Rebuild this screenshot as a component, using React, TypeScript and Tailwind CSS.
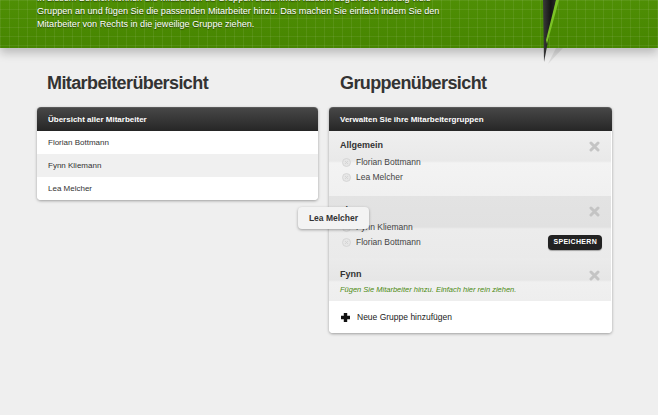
import React from 'react';

const font = { fontFamily: '"Liberation Sans", Arial, Helvetica, sans-serif' };

type Group = {
  name: string;
  members: string[];
  bg: string;
  pad: string;
  hint?: string;
  save?: boolean;
};

const groups: Group[] = [
  {
    name: 'Allgemein',
    members: ['Florian Bottmann', 'Lea Melcher'],
    bg: 'bg-[linear-gradient(#efefef_0px,#e9e9e9_30px,#f3f3f3_32px,#f0f0f0_100%)]',
    pad: 'pt-[8px] pb-[11px]',
  },
  {
    name: 'Firma',
    members: ['Fynn Kliemann', 'Florian Bottmann'],
    bg: 'bg-[linear-gradient(#e3e3e3_0px,#e1e1e1_31px,#ececec_33px,#eaeaea_100%)]',
    pad: 'pt-[8px] pb-[8px]',
    save: true,
  },
  {
    name: 'Fynn',
    members: [],
    bg: 'bg-[linear-gradient(#ebebeb_0px,#e6e6e6_22px,#f0f0f0_24px,#eeeeee_100%)]',
    pad: 'pt-[10px] pb-[4px]',
    hint: 'Fügen Sie Mitarbeiter hinzu. Einfach hier rein ziehen.',
  },
];

function CloseIcon() {
  return (
    <svg width="11" height="11" viewBox="0 0 11 11" className="shrink-0">
      <path d="M2 2 L9 9 M9 2 L2 9" stroke="#c4c4c4" strokeWidth="3" strokeLinecap="round" />
    </svg>
  );
}

function RemoveDot() {
  return (
    <svg width="9" height="9" viewBox="0 0 9 9" className="shrink-0">
      <circle cx="4.5" cy="4.5" r="4" fill="#e6e6e6" stroke="#d2d2d2" strokeWidth="0.8" />
      <path d="M3 3 L6 6 M6 3 L3 6" stroke="#d0d0d0" strokeWidth="0.8" />
    </svg>
  );
}

function PanelHeader({ title }: { title: string }) {
  return (
    <div className="flex h-[24px] items-center rounded-t-[4px] border-t border-[#5a5a5a] bg-[linear-gradient(#474747,#262626)] px-[11px] text-[8px] font-bold text-white">
      {title}
    </div>
  );
}

export default function App() {
  return (
    <div style={font} className="relative h-[415px] w-[658px] overflow-hidden bg-[#efefef]">
      {/* green header */}
      <div className="relative flex h-[48px] flex-col bg-[linear-gradient(rgba(255,255,255,0.07)_1px,transparent_1px),linear-gradient(90deg,rgba(255,255,255,0.07)_1px,transparent_1px),linear-gradient(#4f8f05,#468500)] bg-[size:9px_9px,9px_9px,100%_100%] shadow-[0_5px_9px_rgba(0,0,0,0.22)]">
        <p className="mt-[-8px] pl-[37px] text-[9.1px] leading-[13px] text-white [text-shadow:0_1px_1px_rgba(0,0,0,0.55)]">
          In diesem Bereich können Sie Mitarbeiter zu Gruppen zusammen fassen. Legen Sie beliebig viele
          <br />
          Gruppen an und fügen Sie die passenden Mitarbeiter hinzu. Das machen Sie einfach indem Sie den
          <br />
          Mitarbeiter von Rechts in die jeweilige Gruppe ziehen.
        </p>
      </div>

      {/* spike */}
      <svg className="absolute left-[530px] top-0" width="40" height="66" viewBox="0 0 40 66">
        <defs>
          <linearGradient id="spk" x1="0" x2="1" y1="0" y2="0">
            <stop offset="0" stopColor="#3a3a3a" />
            <stop offset="0.6" stopColor="#151515" />
            <stop offset="1" stopColor="#2a2a2a" />
          </linearGradient>
        </defs>
        <polygon points="26,48 33,48 18,64" fill="rgba(0,0,0,0.08)" />
        <polygon points="13,0 26,0 14,62" fill="url(#spk)" />
        <polygon points="26,0 29,0 17,44 16,40" fill="#7cc326" />
      </svg>

      <div className="flex gap-[11px] px-[37px] pt-[24px]">
        {/* left */}
        <div className="w-[281px]">
          <h1 className="ml-[10px] h-[22px] text-[18px] font-bold leading-[22px] tracking-[-0.6px] text-[#333]">
            Mitarbeiterübersicht
          </h1>
          <div className="mt-[13px] rounded-[4px] bg-white shadow-[0_1px_3px_rgba(0,0,0,0.35)]">
            <PanelHeader title="Übersicht aller Mitarbeiter" />
            {['Florian Bottmann', 'Fynn Kliemann', 'Lea Melcher'].map((n, i) => (
              <div
                key={n}
                className={`flex h-[23px] items-center px-[11px] text-[8px] text-[#333] ${i === 1 ? 'bg-[#f0f0f0]' : 'bg-white'} ${i === 2 ? 'rounded-b-[4px]' : ''}`}
              >
                {n}
              </div>
            ))}
          </div>
        </div>

        {/* right */}
        <div className="w-[283px]">
          <h1 className="ml-[11px] h-[22px] text-[18px] font-bold leading-[22px] tracking-[-0.6px] text-[#333]">
            Gruppenübersicht
          </h1>
          <div className="mt-[13px] rounded-[4px] bg-white shadow-[0_1px_3px_rgba(0,0,0,0.35)]">
            <PanelHeader title="Verwalten Sie ihre Mitarbeitergruppen" />
            {groups.map((g) => (
              <div key={g.name} className={`${g.bg} ${g.pad} mr-px`}>
                <div className="flex h-[14px] items-center justify-between pl-[11px] pr-[11px]">
                  <span className="text-[9px] font-bold text-[#333]">{g.name}</span>
                  <CloseIcon />
                </div>
                {g.members.length > 0 && (
                  <div className="mt-[2px]">
                    {g.members.map((m, i) => (
                      <div key={m} className="flex h-[15px] items-center gap-[5px] pl-[13px] pr-[9px] text-[8.5px] text-[#444]">
                        <RemoveDot />
                        <span className="flex-1">{m}</span>
                        {g.save && i === 1 && (
                          <span className="rounded-[4px] bg-[#222] px-[5px] py-[2px] text-[7px] font-bold tracking-[0.3px] text-white shadow-[0_1px_1px_rgba(0,0,0,0.3)]">
                            SPEICHERN
                          </span>
                        )}
                      </div>
                    ))}
                  </div>
                )}
                {g.hint && (
                  <div className="mt-px flex h-[14px] items-center pl-[11px] text-[7.5px] italic text-[#4c8a12]">
                    {g.hint}
                  </div>
                )}
              </div>
            ))}
            <div className="flex h-[32px] items-center gap-[6px] rounded-b-[4px] bg-white pl-[11px] text-[8.5px] text-[#222]">
              <svg width="11" height="11" viewBox="0 0 11 11">
                <path d="M5.5 1 V10 M1 5.5 H10" stroke="#111" strokeWidth="3.4" />
              </svg>
              Neue Gruppe hinzufügen
            </div>
          </div>
        </div>
      </div>

      {/* dragged item */}
      <div className="absolute left-[298px] top-[207px] flex h-[22px] w-[71px] items-center justify-center rounded-[4px] bg-[#f3f3f3] text-[8.5px] font-bold text-[#333] shadow-[0_1px_3px_rgba(0,0,0,0.35)]">
        Lea Melcher
      </div>
    </div>
  );
}
